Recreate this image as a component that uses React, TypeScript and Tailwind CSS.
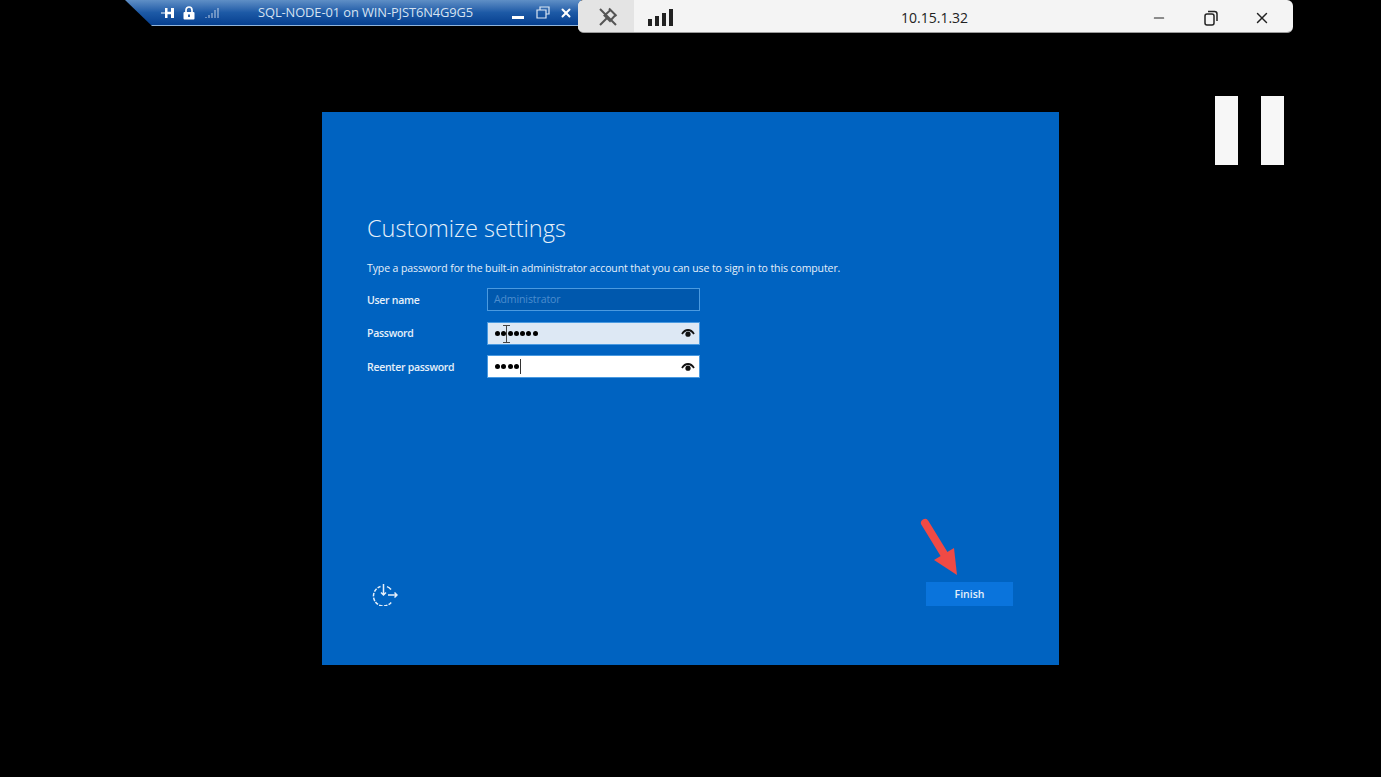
import { X, Minus } from 'lucide-react';

const font = { sans: "font-['Open_Sans',sans-serif]" };

const EyeIcon = () => (
  <svg width="14" height="10" viewBox="0 0 14 10" className="text-[#111]">
    <path d="M1 6C2.600 3.400 4.600 2 7 2s4.400 1.400 6 4" fill="none" stroke="currentColor" strokeWidth="1.800" />
    <circle cx="7" cy="6.200" r="2.600" fill="currentColor" />
  </svg>
);

const Dots = ({ count }: { count: number }) => (
  <div className="flex gap-[1.3px]">
    {Array.from(Array(count).keys()).map((item) => (
      <span className="h-[5px] w-[5px] rounded-full bg-black" key={item} />
    ))}
  </div>
);

const BlueBar = () => (
  <div className="mr-[-3px] flex h-[26px] w-[456px] items-center border-b border-[#8fb4dc] bg-gradient-to-b from-[#5f8fc6] via-[#1d5aa6] to-[#063f8f] pl-[36px] text-white [clip-path:polygon(0_0,100%_0,100%_100%,27px_100%)]">
    <svg width="14" height="10" viewBox="0 0 14 10" className="shrink-0">
      <path d="M0 5h4" stroke="#fff" strokeWidth="1.200" />
      <path d="M4 0h2.500v3.800H10V0h3v10h-3V6.200H6.500V10H4z" fill="#fff" />
    </svg>
    <svg width="12" height="14" viewBox="0 0 12 14" className="ml-[8px] shrink-0">
      <path d="M3 6V4a3 3 0 0 1 6 0v2" fill="none" stroke="#fff" strokeWidth="1.700" />
      <rect x="0.500" y="6" width="11" height="7.500" rx="1" fill="#fff" />
      <rect x="5" y="8.500" width="2" height="2.500" fill="#2b62ab" />
    </svg>
    <svg width="14" height="12" viewBox="0 0 14 12" className="ml-[10px] shrink-0 opacity-60">
      <path d="M1 10v1M4 8v3M7 6v5M10 3v8M13 1v10" stroke="#fff" strokeWidth="1.200" />
    </svg>
    <span className={`ml-[39px] w-[215px] whitespace-nowrap text-[12.9px] tracking-[-0.1px] text-[#d6e2f1] ${font.sans}`}>
      SQL-NODE-01 on WIN-PJST6N4G9G5
    </span>
    <div className="ml-[39px] h-[2.500px] w-[12px] translate-y-[5px] bg-white" />
    <svg width="14" height="14" viewBox="0 0 14 14" className="ml-[12px] shrink-0">
      <path d="M4 3.500V1h9v7h-3M1 4h9v8H1z" fill="none" stroke="#dce7f4" strokeWidth="1.200" />
    </svg>
    <X size={14} strokeWidth={3.400} className="ml-[9px] shrink-0" />
  </div>
);

const LightBar = () => (
  <div className="relative z-10 flex h-[33px] w-[715px] items-center overflow-hidden rounded-[6px] border-b border-[#9a9a9a] bg-[#f4f4f4] text-[#222]">
    <div className="flex h-full w-[56px] shrink-0 items-center justify-center bg-[#e4e4e4] pl-[3px] pt-[2px]">
      <svg width="20" height="20" viewBox="0 0 20 20" fill="none" stroke="#555" strokeWidth="2">
        <path d="M2 2l16 16M11 1.500l7.500 7.500M12.500 3l-6 5.500 5.500 5.500 5.500-6M9 11l-7 7" />
      </svg>
    </div>
    <div className="flex flex-1 items-center pt-[3px]">
      <div className="ml-[14px] flex h-[17px] items-end gap-[3px]">
        <span className="h-[7px] w-[4px] bg-[#222]" />
        <span className="h-[10px] w-[4px] bg-[#222]" />
        <span className="h-[13px] w-[4px] bg-[#222]" />
        <span className="h-[17px] w-[4px] bg-[#222]" />
      </div>
      <span className={`ml-[228px] w-[60px] whitespace-nowrap text-[14px] ${font.sans}`}>10.15.1.32</span>
      <Minus size={16} strokeWidth={1.600} className="ml-[190px]" />
      <svg width="16" height="16" viewBox="0 0 16 16" fill="none" stroke="#222" strokeWidth="1.500" className="ml-[36px]">
        <rect x="2" y="4" width="9" height="11" rx="2" />
        <path d="M5 1.500h6.500a2.500 2.500 0 0 1 2.500 2.500v7" />
      </svg>
      <X size={18} strokeWidth={1.900} className="ml-[34px]" />
    </div>
  </div>
);

const FieldRow = ({ label, children }: { label: string; children: React.ReactNode }) => (
  <div className="flex items-center">
    <label className="w-[120px] pt-[2px] text-[10.5px] font-semibold tracking-[-0.28px] text-[#e6f0fa]">{label}</label>
    {children}
  </div>
);

const PasswordInput = ({ count, filled, caret }: { count: number; filled: string; caret?: boolean }) => (
  <div className={`relative flex h-[23px] w-[213px] items-center justify-between border border-[#4a9ae0] pl-[7px] pr-[4px] ${filled}`}>
    <div className="flex items-center">
      <Dots count={count} />
      {caret && <span className="ml-[1px] h-[15px] w-px bg-[#333]" />}
    </div>
    <EyeIcon />
  </div>
);

const SetupPanel = () => (
  <section className={`mx-auto mt-[79px] flex h-[553px] w-[737px] flex-col bg-[#0063c1] pl-[45px] pr-[46px] pt-[98px] pb-[59px] text-white ${font.sans}`}>
    <h1 className="text-[23.5px] font-light leading-[36px] text-[#e6f0fa]">Customize settings</h1>
    <p className="mt-[14px] text-[10.5px] leading-[16px] tracking-[-0.1px] text-[#e6f0fa]">
      Type a password for the built-in administrator account that you can use to sign in to this computer.
    </p>
    <div className="mt-[12px] flex flex-col gap-[10.5px]">
      <FieldRow label="User name">
        <div className="flex h-[23px] w-[213px] items-center border border-[#4a9ae0] bg-[#0058ad] px-[6px] pt-[1px] text-[10.5px] tracking-[-0.1px] text-[#4c8dce]">
          Administrator
        </div>
      </FieldRow>
      <FieldRow label="Password">
        <div className="relative">
          <PasswordInput count={7} filled="bg-[#dde8f4]" />
          <svg width="9" height="18" viewBox="0 0 9 18" className="absolute left-[15px] top-[3px]" fill="none" stroke="#444" strokeWidth="1">
            <path d="M1 .5h7M1 17.500h7M4.500 .5v17" />
          </svg>
        </div>
      </FieldRow>
      <FieldRow label="Reenter password">
        <PasswordInput count={4} filled="bg-white" caret />
      </FieldRow>
    </div>
    <div className="mt-auto flex items-end justify-between">
      <svg width="26" height="26" viewBox="0 0 26 26" fill="none" stroke="#e6f0fa" strokeWidth="1.500" className="ml-[5px]">
        <path d="M19.200 22.400A10 10 0 1 1 8.500 6.500" strokeDasharray="3.500 1.300" />
        <path d="M15 6.600A10 10 0 0 1 19 9.500" />
        <path d="M11.500 4v11M9 12.500l2.500 2.500 2.500-2.500M16 15h9M22.500 12.500L25 15l-2.500 2.500" />
      </svg>
      <div className="relative">
        <button className="h-[24px] w-[87px] bg-[#0a74dc] pt-[2px] text-[10.5px] font-semibold text-[#e6f0fa]">Finish</button>
        <svg width="40" height="60" viewBox="0 0 40 60" className="absolute bottom-[28px] left-[-6px]">
          <path d="M5 5l19 31" stroke="#f04a45" strokeWidth="8" strokeLinecap="round" />
          <path d="M37 57L14 42l20-12z" fill="#f04a45" />
        </svg>
      </div>
    </div>
  </section>
);

const App = () => (
  <main className="relative h-[777px] w-[1381px] overflow-hidden bg-black">
    <div className="flex items-start pl-[125px]">
      <BlueBar />
      <LightBar />
    </div>
    <SetupPanel />
    <div className="absolute left-[1215px] top-[96px] flex gap-[23px]">
      <div className="h-[69px] w-[23px] bg-[#f7f7f7]" />
      <div className="h-[69px] w-[23px] bg-[#f7f7f7]" />
    </div>
  </main>
);

export default App;
